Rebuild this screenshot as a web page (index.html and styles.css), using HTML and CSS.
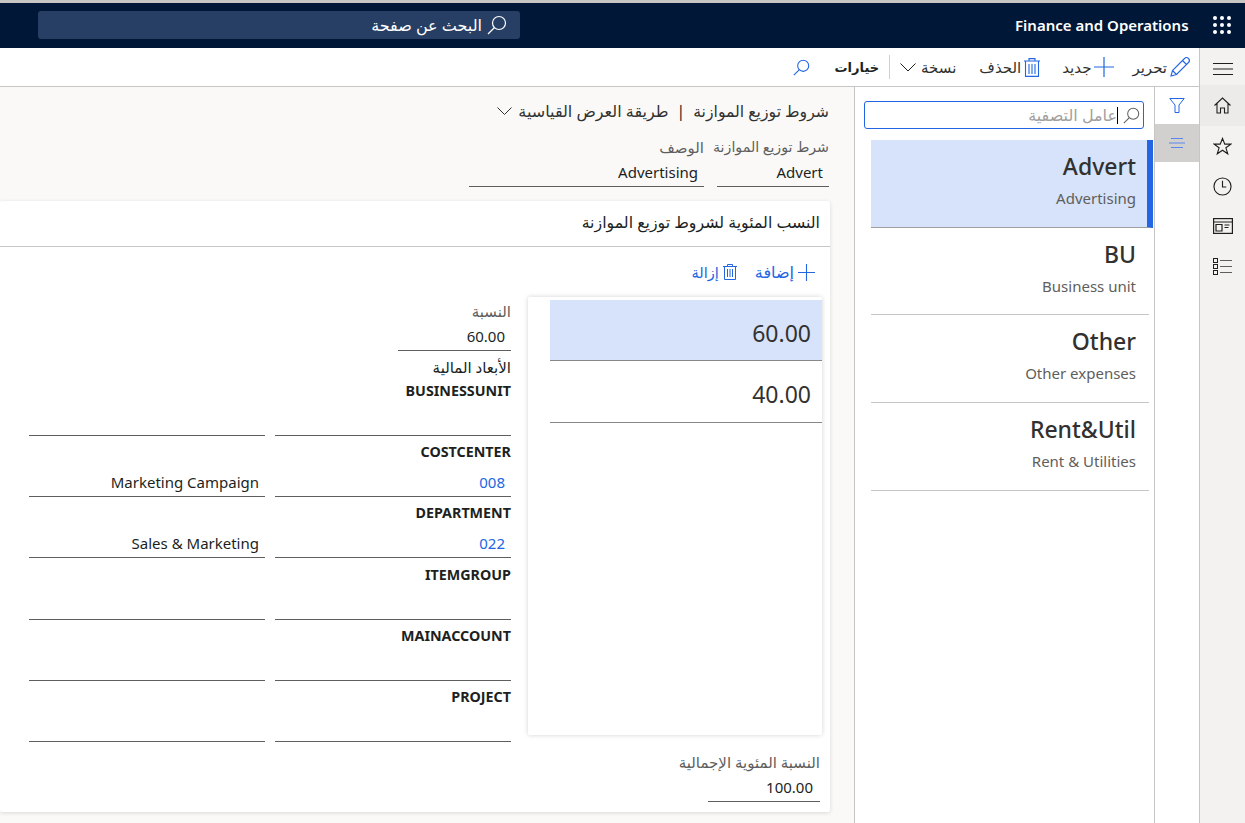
FILE: index.html
```html
<!DOCTYPE html>
<html lang="ar" dir="rtl">
<head>
    <meta charset="UTF-8">
    <meta name="viewport" content="width=device-width, initial-scale=1.0">
    <title>Finance and Operations</title>
    <link rel="stylesheet" href="styles.css">
</head>
<body>
    <header class="topbar">
        <svg class="waffle" width="18" height="18" viewBox="0 0 18 18" fill="#fff">
            <circle cx="2" cy="2" r="2"/><circle cx="9" cy="2" r="2"/><circle cx="16" cy="2" r="2"/>
            <circle cx="2" cy="9" r="2"/><circle cx="9" cy="9" r="2"/><circle cx="16" cy="9" r="2"/>
            <circle cx="2" cy="16" r="2"/><circle cx="9" cy="16" r="2"/><circle cx="16" cy="16" r="2"/>
        </svg>
        <div class="app-name" dir="ltr">Finance and Operations</div>
        <div class="page-search">
            <svg width="20" height="20" viewBox="0 0 20 20" fill="none" stroke="#fff" stroke-width="1.2"><circle cx="12" cy="8" r="6.5"/><path d="M7.500 12.500L1 19"/></svg>
            <span>البحث عن صفحة</span>
        </div>
    </header>

    <div class="shell">
        <nav class="rail">
            <div class="rail-btn rail-menu">
                <svg width="20" height="12" viewBox="0 0 20 12" stroke="#201f1e" stroke-width="1"><path d="M0 .5h20M0 6h20M0 11.5h20"/></svg>
            </div>
            <div class="rail-btn rail-active">
                <svg width="17" height="17" viewBox="0 0 17 17" fill="none" stroke="#201f1e" stroke-width="1.1"><path d="M.5 8.500L8.500 1l8 7.500M3 6.500V16h3.500v-5h4v5H14V6.500"/></svg>
            </div>
            <div class="rail-btn">
                <svg width="19" height="19" viewBox="0 0 20 20" fill="none" stroke="#201f1e" stroke-width="1.2"><path d="M10 1.500l2.400 6h6.300l-5.100 3.900 1.900 6.300L10 14l-5.500 3.700 1.900-6.300L1.300 7.500h6.300z"/></svg>
            </div>
            <div class="rail-btn">
                <svg width="19" height="19" viewBox="0 0 20 20" fill="none" stroke="#201f1e" stroke-width="1.2"><circle cx="10" cy="10" r="9"/><path d="M10 4v6.500h4"/></svg>
            </div>
            <div class="rail-btn">
                <svg width="20" height="16" viewBox="0 0 20 16" fill="none" stroke="#201f1e" stroke-width="1.2"><rect x=".6" y=".6" width="18.800" height="14.800"/><path d="M.6 4h18.800M3 6.500h6v6.500H3zM11.500 7h5M11.500 9.500h4"/></svg>
            </div>
            <div class="rail-btn">
                <svg width="19" height="17" viewBox="0 0 19 17" fill="none" stroke="#201f1e" stroke-width="1"><rect x=".5" y=".5" width="4" height="4"/><rect x=".5" y="6.500" width="4" height="4"/><rect x=".5" y="12.500" width="4" height="4"/><path d="M7 2.500h12M7 8.500h12M7 14.500h12" stroke="#605e5c"/></svg>
            </div>
        </nav>

        <div class="workspace">
            <div class="toolbar">
                <button class="tool">
                    <svg width="20" height="20" viewBox="0 0 20 20" fill="none" stroke="#2266e3" stroke-width="1.100"><path d="M1 19l1.500-5.500L14.500 1.500a2.500 2.500 0 0 1 4 4L6.500 17.500zM12.500 3.500l4 4M2.500 13.500l4 4"/></svg>
                    <span>تحرير</span>
                </button>
                <button class="tool tool-new">
                    <svg width="20" height="20" viewBox="0 0 20 20" stroke="#2266e3" stroke-width="1.200"><path d="M10 0v20M0 10h20"/></svg>
                    <span>جديد</span>
                </button>
                <button class="tool tool-del">
                    <svg width="16" height="19" viewBox="0 0 16 19" fill="none" stroke="#2266e3" stroke-width="1.100"><path d="M0 3h16M5 3V.6h6V3M1.500 3v15.400h13V3M5 6v10M8 6v10M11 6v10"/></svg>
                    <span>الحذف</span>
                </button>
                <button class="tool tool-copy">
                    <span>نسخة</span>
                    <svg width="16" height="9" viewBox="0 0 16 9" fill="none" stroke="#201f1e" stroke-width="1"><path d="M.5.500L8 8 15.500.500"/></svg>
                </button>
                <div class="tool-sep"></div>
                <button class="tool tool-options">خيارات</button>
                <svg class="tool-search" width="17" height="17" viewBox="0 0 20 20" fill="none" stroke="#2266e3" stroke-width="1.300"><circle cx="12" cy="8" r="6.500"/><path d="M7.500 12.500L1 19"/></svg>
            </div>

            <div class="content">
                <div class="tabs">
                    <div class="tab">
                        <svg width="16" height="15" viewBox="0 0 16 15" fill="none" stroke="#2266e3" stroke-width="1"><path d="M.8.500h14.400L10 7v7.500H6V7z"/></svg>
                    </div>
                    <div class="tab tab-active">
                        <svg width="16" height="10" viewBox="0 0 16 10" stroke="#5b86ee" stroke-width="1"><path d="M2 .5h12M0 5h16M2 9.500h12"/></svg>
                    </div>
                </div>

                <aside class="list-panel">
                    <div class="filter">
                        <svg width="17" height="17" viewBox="0 0 20 20" fill="none" stroke="#605e5c" stroke-width="1.200"><circle cx="12" cy="8" r="6.500"/><path d="M7.500 12.500L1 19"/></svg>
                        <span class="caret"></span>
                        <span class="filter-text">عامل التصفية</span>
                    </div>
                    <ul class="records">
                        <li class="record record-selected"><b dir="ltr">Advert</b><span dir="ltr">Advertising</span></li>
                        <li class="record"><b dir="ltr">BU</b><span dir="ltr">Business unit</span></li>
                        <li class="record"><b dir="ltr">Other</b><span dir="ltr">Other expenses</span></li>
                        <li class="record"><b dir="ltr">Rent&amp;Util</b><span dir="ltr">Rent &amp; Utilities</span></li>
                    </ul>
                </aside>

                <main class="details">
                    <div class="crumb">
                        <span>شروط توزيع الموازنة</span>
                        <span class="crumb-bar">|</span>
                        <span class="crumb-view">طريقة العرض القياسية</span>
                        <svg width="15" height="8" viewBox="0 0 15 8" fill="none" stroke="#323130" stroke-width="1"><path d="M.5.500L7.500 7.500 14.500.500"/></svg>
                    </div>
                    <div class="head-fields">
                        <div class="field field-code">
                            <label>شرط توزيع الموازنة</label>
                            <div class="value" dir="ltr">Advert</div>
                        </div>
                        <div class="field field-desc">
                            <label>الوصف</label>
                            <div class="value" dir="ltr">Advertising</div>
                        </div>
                    </div>

                    <section class="card">
                        <h2 class="card-title">النسب المئوية لشروط توزيع الموازنة</h2>
                        <div class="actions">
                            <span class="action">
                                <svg width="17" height="17" viewBox="0 0 17 17" stroke="#2266e3" stroke-width="1.100"><path d="M8.500 0v17M0 8.500h17"/></svg>
                                إضافة
                            </span>
                            <span class="action action-remove">
                                <svg width="14" height="16" viewBox="0 0 14 16" fill="none" stroke="#2266e3" stroke-width="1"><path d="M0 2.500h14M4.500 2.500V.5h5v2M1.500 2.500v13h11v-13M4.500 5v8M7 5v8M9.500 5v8"/></svg>
                                إزالة
                            </span>
                        </div>
                        <div class="split">
                            <div class="lines">
                                <div class="line line-selected" dir="ltr">60.00</div>
                                <div class="line" dir="ltr">40.00</div>
                            </div>
                            <div class="line-form">
                                <div class="field field-pct">
                                    <label>النسبة</label>
                                    <div class="value" dir="ltr">60.00</div>
                                </div>
                                <div class="dim-title">الأبعاد المالية</div>
                                <div class="dim">
                                    <div class="dim-name" dir="ltr">BUSINESSUNIT</div>
                                    <div class="dim-cells"><div class="dim-cell"></div><div class="dim-cell"></div></div>
                                </div>
                                <div class="dim">
                                    <div class="dim-name" dir="ltr">COSTCENTER</div>
                                    <div class="dim-cells"><div class="dim-cell dim-link" dir="ltr">008</div><div class="dim-cell" dir="ltr">Marketing Campaign</div></div>
                                </div>
                                <div class="dim">
                                    <div class="dim-name" dir="ltr">DEPARTMENT</div>
                                    <div class="dim-cells"><div class="dim-cell dim-link" dir="ltr">022</div><div class="dim-cell" dir="ltr">Sales &amp; Marketing</div></div>
                                </div>
                                <div class="dim">
                                    <div class="dim-name" dir="ltr">ITEMGROUP</div>
                                    <div class="dim-cells"><div class="dim-cell"></div><div class="dim-cell"></div></div>
                                </div>
                                <div class="dim">
                                    <div class="dim-name" dir="ltr">MAINACCOUNT</div>
                                    <div class="dim-cells"><div class="dim-cell"></div><div class="dim-cell"></div></div>
                                </div>
                                <div class="dim">
                                    <div class="dim-name" dir="ltr">PROJECT</div>
                                    <div class="dim-cells"><div class="dim-cell"></div><div class="dim-cell"></div></div>
                                </div>
                            </div>
                        </div>
                        <div class="field field-total">
                            <label>النسبة المئوية الإجمالية</label>
                            <div class="value" dir="ltr">100.00</div>
                        </div>
                    </section>
                </main>
            </div>
        </div>
    </div>
</body>
</html>
```

FILE: styles.css
```css
html, body {
    margin: 0;
    padding: 0;
    height: 823px;
    overflow: hidden;
}
body {
    font-family: "Noto Sans", "DejaVu Sans", sans-serif;
    font-size: 15px;
    color: #201f1e;
    background-color: #fff;
    border-top: 3px solid #c8c6c4;
    box-sizing: border-box;
}

/* top bar */
.topbar {
    height: 45px;
    box-sizing: border-box;
    padding-bottom: 2px;
    background-color: #001737;
    display: flex;
    align-items: center;
    color: #fff;
}
.waffle {
    margin-right: 14px;
    margin-left: 16px;
}
.app-name {
    font-size: 15px;
    font-weight: 600;
    width: 182px;
    text-align: left;
    white-space: nowrap;
}
.page-search {
    margin-right: auto;
    margin-left: 38px;
    width: 482px;
    height: 28px;
    box-sizing: border-box;
    padding: 0 13px;
    background-color: #273f65;
    border-radius: 3px;
    display: flex;
    align-items: center;
    gap: 5px;
    font-size: 16px;
}

/* main layout */
.shell {
    display: flex;
    height: 775px;
}
.rail {
    flex: none;
    width: 46px;
    background-color: #f3f2f1;
    border-left: 1px solid #c8c6c4;
    box-sizing: border-box;
}
.rail-btn {
    height: 40px;
    display: flex;
    align-items: center;
    justify-content: center;
}
.rail-menu {
    height: 37px;
    box-sizing: border-box;
    padding-top: 4px;
}
.rail-active {
    background-color: #edebe9;
    height: 41px;
}
.workspace {
    flex: 1;
    min-width: 0;
    display: flex;
    flex-direction: column;
}

/* action pane */
.toolbar {
    height: 39px;
    box-sizing: border-box;
    border-bottom: 1px solid #c8c6c4;
    display: flex;
    align-items: center;
    padding-right: 9px;
}
.tool {
    border: none;
    background: none;
    padding: 0;
    font: inherit;
    color: #323130;
    display: flex;
    align-items: center;
    gap: 3px;
    white-space: nowrap;
}
.tool-new {
    margin-right: 18px;
}
.tool-del {
    margin-right: 22px;
}
.tool-copy {
    margin-right: 23px;
    gap: 5px;
}
.tool-sep {
    width: 1px;
    height: 24px;
    background-color: #d2d0ce;
    margin: 0 10px;
}
.tool-options {
    font-size: 13px;
    font-weight: 600;
    color: #201f1e;
}
.tool-search {
    margin-right: 25px;
}

.content {
    flex: 1;
    display: flex;
    min-height: 0;
}
.tabs {
    width: 45px;
    flex: none;
    box-sizing: border-box;
    border-left: 1px solid #c8c6c4;
}
.tab {
    height: 37px;
    display: flex;
    align-items: center;
    justify-content: center;
}
.tab-active {
    height: 38px;
    background-color: #d2d0ce;
}

/* record list */
.list-panel {
    width: 300px;
    flex: none;
    box-sizing: border-box;
    border-left: 1px solid #c8c6c4;
    padding-top: 14px;
}
.filter {
    width: 280px;
    height: 28px;
    margin-right: 10px;
    box-sizing: border-box;
    border: 1px solid #2266e3;
    border-radius: 3px;
    display: flex;
    align-items: center;
    padding-right: 3px;
    color: #a19f9d;
}
.caret {
    width: 1px;
    height: 17px;
    background-color: #000;
    margin-right: 5px;
}
.filter-text {
    font-size: 16px;
}
.records {
    list-style: none;
    margin: 11px 0 0;
    padding: 0;
}
.record {
    height: 87.7px;
    box-sizing: border-box;
    margin-right: 5px;
    margin-left: 16px;
    padding: 9px 13px 0 0;
    border-bottom: 1px solid #c8c6c4;
    display: flex;
    flex-direction: column;
    align-items: flex-start;
}
.record b {
    font-size: 23px;
    font-weight: 500;
    line-height: 34px;
    color: #323130;
}
.record span {
    font-size: 15px;
    line-height: 28px;
    margin-top: 1px;
    color: #605e5c;
}
.record-selected {
    margin-right: 1px;
    padding-right: 11px;
    background-color: #d6e3fa;
    border-right: 6px solid #2266e3;
    border-bottom-color: #a19f9d;
}

/* details */
.details {
    flex: 1;
    min-width: 0;
    background-color: #faf9f8;
    padding: 14px 25px 0 0;
    box-sizing: border-box;
}
.crumb {
    display: flex;
    align-items: center;
    height: 20px;
    color: #323130;
    font-size: 15.7px;
    white-space: nowrap;
}
.crumb-bar {
    color: #201f1e;
    margin: 0 8px;
}
.crumb-view {
    font-size: 16px;
    margin-left: 6px;
}
.head-fields {
    display: flex;
    gap: 13px;
    margin-top: 16px;
}
.field label {
    display: block;
    color: #605e5c;
    line-height: 20px;
    white-space: nowrap;
}
.field-code label {
    font-size: 14.2px;
}
.value {
    border-bottom: 1px solid #605e5c;
    height: 30px;
    line-height: 30px;
    box-sizing: border-box;
    text-align: right;
    padding-right: 6px;
    white-space: nowrap;
}
.field-code {
    width: 112px;
}
.field-desc {
    width: 235px;
}
.card {
    background-color: #fff;
    margin-top: 14px;
    margin-right: -1px;
    height: 611px;
    border-radius: 2px;
    box-shadow: 0 1px 4px rgba(0, 0, 0, 0.13);
}
.card-title {
    margin: 0;
    height: 46px;
    box-sizing: border-box;
    border-bottom: 1px solid #c8c6c4;
    padding-right: 10px;
    font-size: 15.8px;
    font-weight: 500;
    line-height: 42px;
}
.actions {
    display: flex;
    gap: 18px;
    height: 50px;
    align-items: center;
    padding-right: 15px;
    color: #2266e3;
    font-size: 16px;
}
.action {
    display: flex;
    align-items: center;
    gap: 4px;
}
.action-remove {
    font-size: 14.5px;
}
.split {
    display: flex;
    align-items: flex-start;
    height: 438px;
    padding-right: 8px;
}
.lines {
    width: 294px;
    height: 438px;
    flex: none;
    box-sizing: border-box;
    padding-top: 3px;
    padding-left: 22px;
    background-color: #fff;
    border-radius: 2px;
    box-shadow: 0 0 5px rgba(0, 0, 0, 0.18);
}
.line {
    height: 62px;
    box-sizing: border-box;
    border-bottom: 1px solid #8a8886;
    font-size: 23px;
    line-height: 66px;
    text-align: right;
    padding-right: 11px;
    color: #323130;
}
.line-selected {
    height: 61px;
    background-color: #d6e3fa;
}
.line-form {
    margin-right: 17px;
    width: 482px;
    padding-top: 4px;
}
.field-pct {
    width: 113px;
}
.dim-title {
    font-weight: 500;
    line-height: 20px;
    margin-top: 6px;
    margin-bottom: 4px;
}
.dim {
    height: 61.2px;
}
.dim-name {
    font-weight: 700;
    font-size: 14.3px;
    line-height: 20px;
    text-align: right;
}
.dim-cells {
    display: flex;
    gap: 10px;
}
.dim-cell {
    width: 236px;
    height: 35px;
    box-sizing: border-box;
    border-bottom: 1px solid #605e5c;
    text-align: right;
    padding: 10px 6px 0 0;
    line-height: 20px;
    white-space: nowrap;
}
.dim-link {
    color: #2266e3;
}
.field-total {
    width: 112px;
    margin-right: 10px;
    margin-top: 17px;
}
.field-total .value {
    padding-right: 7px;
}
```
